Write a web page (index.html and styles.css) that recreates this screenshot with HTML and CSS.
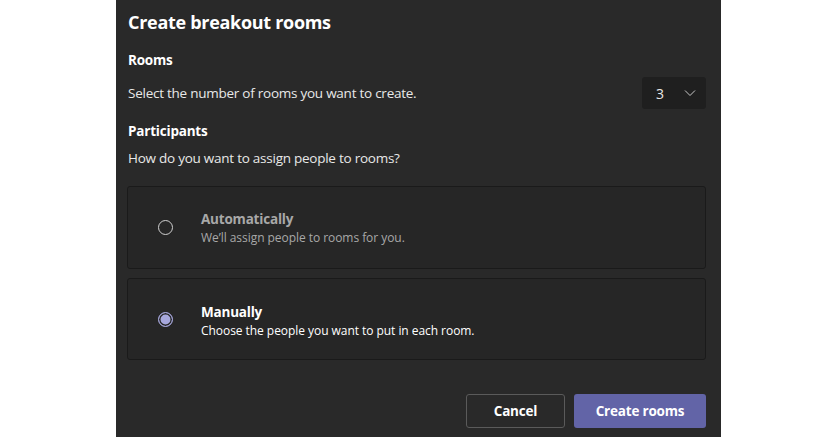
FILE: index.html
```html
<!DOCTYPE html>
<html lang="en">
<head>
<meta charset="utf-8">
<title>Create breakout rooms</title>
<link rel="stylesheet" href="styles.css">
</head>
<body>
<div class="panel">
  <h1 class="title">Create breakout rooms</h1>
  <h2 class="section">Rooms</h2>
  <div class="rooms-row">
    <p class="desc">Select the number of rooms you want to create.</p>
    <div class="select">
      <span class="select-value">3</span>
      <svg class="chevron" width="12" height="12" viewBox="0 0 12 12"><path d="M1 3.5 L6 8.5 L11 3.5" fill="none" stroke="#c8c8c8" stroke-width="1"/></svg>
    </div>
  </div>
  <h2 class="section section-participants">Participants</h2>
  <p class="desc desc-assign">How do you want to assign people to rooms?</p>
  <div class="options">
    <div class="option">
      <span class="radio"></span>
      <div class="option-text">
        <div class="option-title muted">Automatically</div>
        <div class="option-sub muted">We’ll assign people to rooms for you.</div>
      </div>
    </div>
    <div class="option option-manual">
      <span class="radio radio-checked"></span>
      <div class="option-text">
        <div class="option-title">Manually</div>
        <div class="option-sub">Choose the people you want to put in each room.</div>
      </div>
    </div>
  </div>
  <div class="actions">
    <button class="btn btn-secondary">Cancel</button>
    <button class="btn btn-primary">Create rooms</button>
  </div>
</div>
</body>
</html>
```
FILE: styles.css
```css
html, body {
  margin: 0;
  padding: 0;
  background: #ffffff;
}
body {
  font-family: "Open Sans", "Noto Sans", "Liberation Sans", sans-serif;
  color: #ffffff;
}
.panel {
  margin-left: 116px;
  width: 605px;
  height: 437px;
  box-sizing: border-box;
  background: #292929;
  padding: 10px 15px 0 11px;
  display: flex;
  flex-direction: column;
}
.title {
  margin: 0 0 0 1px;
  font-size: 18px;
  font-weight: 700;
  line-height: 24px;
  letter-spacing: -0.3px;
}
.section {
  margin: 16px 0 0 1px;
  font-size: 13.5px;
  font-weight: 700;
  line-height: 20px;
  letter-spacing: -0.2px;
}
.rooms-row {
  margin-top: 7px;
  display: flex;
  align-items: center;
  justify-content: space-between;
  height: 32px;
}
.desc {
  margin: 0 0 0 1px;
  font-size: 13.5px;
  line-height: 20px;
  letter-spacing: -0.25px;
  color: #e8e8e8;
}
.select {
  width: 64px;
  height: 32px;
  box-sizing: border-box;
  background: #1f1f1f;
  border-radius: 3px;
  display: flex;
  align-items: center;
  padding: 0 10px 0 14px;
  justify-content: space-between;
}
.select-value {
  font-size: 14px;
  color: #e8e8e8;
}
.chevron {
  display: block;
}
.section-participants {
  margin-top: 12px;
}
.desc-assign {
  margin-top: 7px;
}
.options {
  margin-top: 18px;
  display: flex;
  flex-direction: column;
  gap: 9px;
}
.option {
  height: 83px;
  box-sizing: border-box;
  border: 1px solid #1a1a1a;
  border-radius: 3px;
  background: #262626;
  display: flex;
  align-items: center;
  padding-left: 30px;
}
.option-manual {
  height: 82px;
}
.radio {
  width: 15px;
  height: 15px;
  box-sizing: border-box;
  border: 1px solid #d0d0d0;
  border-radius: 50%;
  flex: none;
}
.radio-checked {
  border-color: #a6a7dc;
  background: #a6a7dc;
  box-shadow: inset 0 0 0 1.5px #262626;
}
.option-text {
  margin-left: 28px;
  display: flex;
  flex-direction: column;
}
.option-manual .option-text {
  margin-top: 4px;
}
.option-title {
  font-size: 13.5px;
  font-weight: 700;
  line-height: 19px;
  letter-spacing: -0.2px;
}
.option-sub {
  font-size: 12px;
  line-height: 17px;
  letter-spacing: -0.05px;
}
.muted {
  color: #a8a8a8;
}
.actions {
  margin-top: 34px;
  display: flex;
  justify-content: flex-end;
  gap: 9px;
}
.btn {
  height: 34px;
  box-sizing: border-box;
  border-radius: 3px;
  font-family: inherit;
  font-size: 13.5px;
  font-weight: 700;
  letter-spacing: -0.2px;
  color: #ffffff;
  cursor: pointer;
}
.btn-secondary {
  width: 99px;
  background: #292929;
  border: 1px solid #5a5a5a;
}
.btn-primary {
  width: 132px;
  background: #6264a7;
  border: none;
}
```
